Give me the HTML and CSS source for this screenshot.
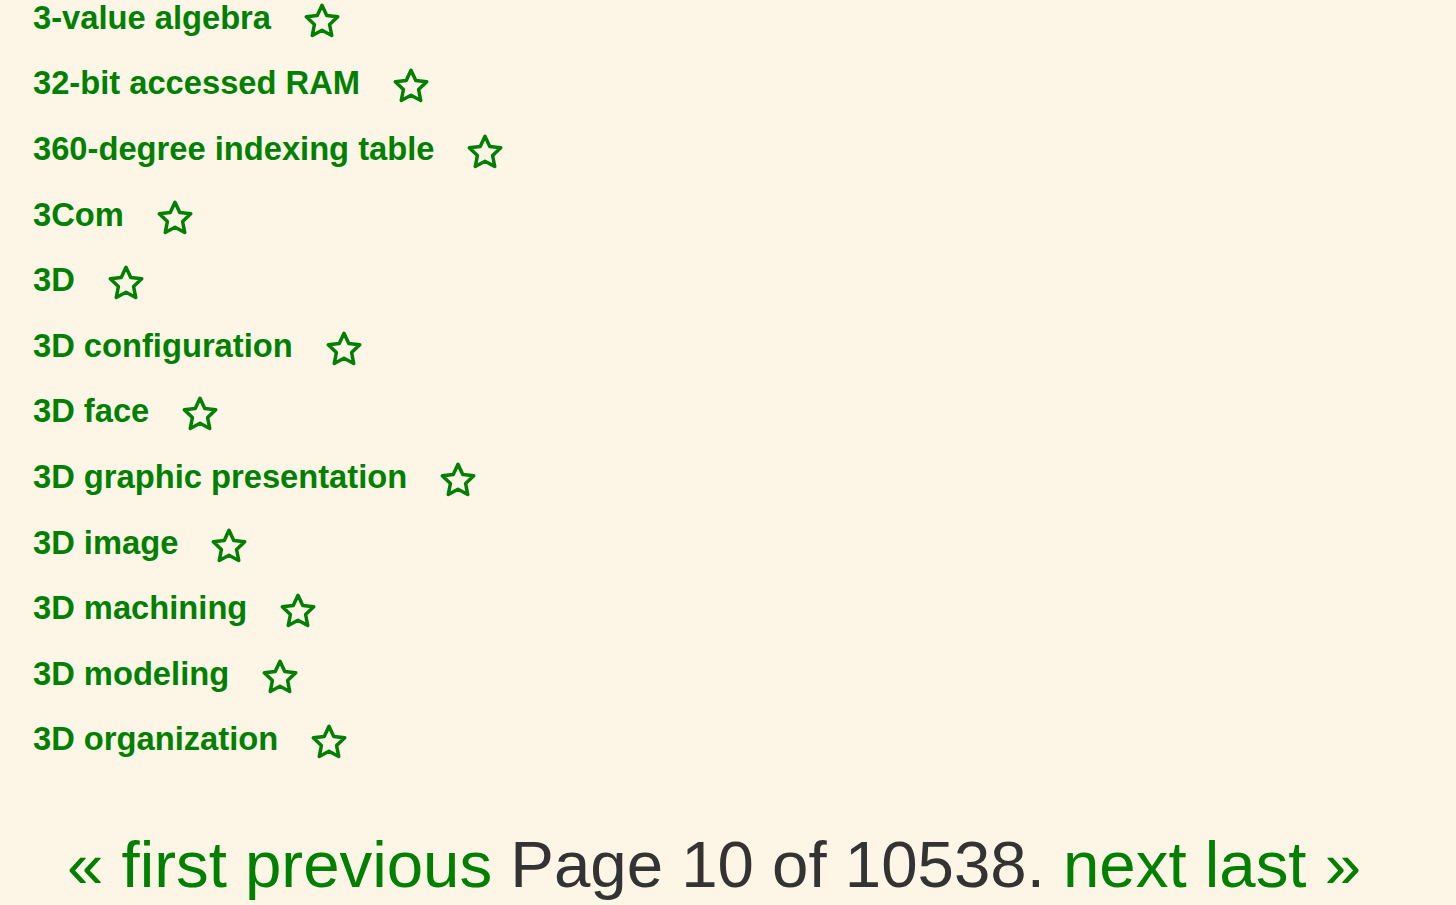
FILE: index.html
```html
<!DOCTYPE html>
<html>
<head>
<meta charset="utf-8">
<link rel="stylesheet" href="styles.css">
</head>
<body>
<ul class="terms">
<li><a href="#">3-value algebra</a><svg class="star" viewBox="0 0 24 24"><path d="M12 2.6l2.85 6.1 6.6.8-4.9 4.6 1.3 6.6L12 17.5l-5.85 3.2 1.3-6.6-4.9-4.6 6.6-.8z"/></svg></li>
<li><a href="#">32-bit accessed RAM</a><svg class="star" viewBox="0 0 24 24"><path d="M12 2.6l2.85 6.1 6.6.8-4.9 4.6 1.3 6.6L12 17.5l-5.85 3.2 1.3-6.6-4.9-4.6 6.6-.8z"/></svg></li>
<li><a href="#">360-degree indexing table</a><svg class="star" viewBox="0 0 24 24"><path d="M12 2.6l2.85 6.1 6.6.8-4.9 4.6 1.3 6.6L12 17.5l-5.85 3.2 1.3-6.6-4.9-4.6 6.6-.8z"/></svg></li>
<li><a href="#">3Com</a><svg class="star" viewBox="0 0 24 24"><path d="M12 2.6l2.85 6.1 6.6.8-4.9 4.6 1.3 6.6L12 17.5l-5.85 3.2 1.3-6.6-4.9-4.6 6.6-.8z"/></svg></li>
<li><a href="#">3D</a><svg class="star" viewBox="0 0 24 24"><path d="M12 2.6l2.85 6.1 6.6.8-4.9 4.6 1.3 6.6L12 17.5l-5.85 3.2 1.3-6.6-4.9-4.6 6.6-.8z"/></svg></li>
<li><a href="#">3D configuration</a><svg class="star" viewBox="0 0 24 24"><path d="M12 2.6l2.85 6.1 6.6.8-4.9 4.6 1.3 6.6L12 17.5l-5.85 3.2 1.3-6.6-4.9-4.6 6.6-.8z"/></svg></li>
<li><a href="#">3D face</a><svg class="star" viewBox="0 0 24 24"><path d="M12 2.6l2.85 6.1 6.6.8-4.9 4.6 1.3 6.6L12 17.5l-5.85 3.2 1.3-6.6-4.9-4.6 6.6-.8z"/></svg></li>
<li><a href="#">3D graphic presentation</a><svg class="star" viewBox="0 0 24 24"><path d="M12 2.6l2.85 6.1 6.6.8-4.9 4.6 1.3 6.6L12 17.5l-5.85 3.2 1.3-6.6-4.9-4.6 6.6-.8z"/></svg></li>
<li><a href="#">3D image</a><svg class="star" viewBox="0 0 24 24"><path d="M12 2.6l2.85 6.1 6.6.8-4.9 4.6 1.3 6.6L12 17.5l-5.85 3.2 1.3-6.6-4.9-4.6 6.6-.8z"/></svg></li>
<li><a href="#">3D machining</a><svg class="star" viewBox="0 0 24 24"><path d="M12 2.6l2.85 6.1 6.6.8-4.9 4.6 1.3 6.6L12 17.5l-5.85 3.2 1.3-6.6-4.9-4.6 6.6-.8z"/></svg></li>
<li><a href="#">3D modeling</a><svg class="star" viewBox="0 0 24 24"><path d="M12 2.6l2.85 6.1 6.6.8-4.9 4.6 1.3 6.6L12 17.5l-5.85 3.2 1.3-6.6-4.9-4.6 6.6-.8z"/></svg></li>
<li><a href="#">3D organization</a><svg class="star" viewBox="0 0 24 24"><path d="M12 2.6l2.85 6.1 6.6.8-4.9 4.6 1.3 6.6L12 17.5l-5.85 3.2 1.3-6.6-4.9-4.6 6.6-.8z"/></svg></li>
</ul>
<div class="pager"><a href="#">« first</a> <a href="#">previous</a> Page 10 of 10538. <a href="#">next</a> <a href="#">last »</a></div>
</body>
</html>
```
FILE: styles.css
```css
html, body {
  margin: 0;
  padding: 0;
  background: #fdf5e6;
  font-family: "Liberation Sans", Arial, sans-serif;
  overflow: hidden;
}
.terms {
  list-style: none;
  margin: -15px 0 0 0;
  padding: 0 0 0 33px;
}
.terms li {
  height: 65.6px;
  display: flex;
  align-items: center;
}
.terms a {
  color: #008000;
  font-weight: bold;
  font-size: 32.7px;
  text-decoration: none;
}
.star {
  width: 40px;
  height: 40px;
  margin-left: 31px;
  margin-top: 6px;
  fill: none;
  stroke: #008000;
  stroke-width: 2.1;
  stroke-linejoin: round;
}
.pager {
  margin-top: 55px;
  padding-right: 28px;
  text-align: center;
  font-size: 65.4px;
  color: #333;
}
.pager a {
  color: #008000;
  text-decoration: none;
}
```
